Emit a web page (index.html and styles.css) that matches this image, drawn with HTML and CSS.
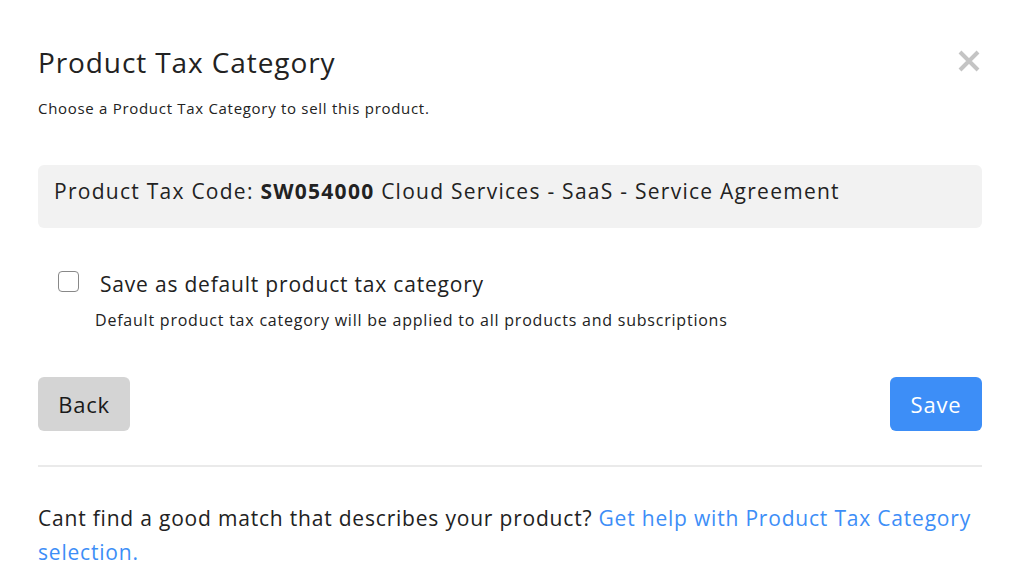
FILE: index.html
```html
<!DOCTYPE html>
<html>
<head>
<meta charset="utf-8">
<link rel="stylesheet" href="styles.css">
</head>
<body>
<div class="modal">
  <div class="header">
    <h1 class="title">Product Tax Category</h1>
    <button class="close" aria-label="Close">
      <svg width="22" height="22" viewBox="0 0 22 22"><path d="M2 2 L20 20 M20 2 L2 20" stroke="#c4c4c4" stroke-width="4"/></svg>
    </button>
  </div>
  <p class="subtitle">Choose a Product Tax Category to sell this product.</p>
  <div class="code-box">Product Tax Code: <b>SW054000</b> Cloud Services - SaaS - Service Agreement</div>
  <label class="check-row">
    <span class="checkbox"></span>
    <span class="check-label">Save as default product tax category</span>
  </label>
  <p class="help">Default product tax category will be applied to all products and subscriptions</p>
  <div class="actions">
    <button class="btn btn-back">Back</button>
    <button class="btn btn-save">Save</button>
  </div>
  <hr class="divider">
  <p class="footer">Cant find a good match that describes your product? <a href="#">Get help with Product Tax Category selection.</a></p>
</div>
</body>
</html>
```
FILE: styles.css
```css
html, body { margin: 0; padding: 0; background: #fff; }
body { font-family: "Open Sans", "Lato", sans-serif; color: #222; }
.modal { padding: 40px 42px 0 38px; }
.header { display: flex; justify-content: space-between; align-items: center; height: 44px; }
.title { margin: 0; font-size: 28px; font-weight: 400; color: #222; letter-spacing: 0.9px; }
.close { background: none; border: 0; padding: 0; margin-right: 2px; margin-top: -2px; display: flex; }
.subtitle { margin: 14px 0 0; font-size: 15px; color: #222; line-height: 20px; letter-spacing: 0.7px; }
.code-box { margin-top: 47px; background: #f2f2f2; border-radius: 6px; height: 63px; padding: 12px 16px 0; box-sizing: border-box; font-size: 21px; line-height: 28px; color: #222; letter-spacing: 1.26px; }
.code-box b { font-weight: 700; }
.check-row { display: flex; align-items: center; margin-top: 38px; padding-left: 20px; }
.checkbox { width: 21px; height: 21px; border: 1.5px solid #888; border-radius: 4px; box-sizing: border-box; }
.check-label { margin-left: 21px; font-size: 21px; line-height: 30px; letter-spacing: 0.8px; position: relative; top: 3px; }
.help { margin: 14px 0 0 57px; font-size: 16px; line-height: 20px; letter-spacing: 0.78px; }
.actions { display: flex; justify-content: space-between; margin-top: 47px; }
.btn { border: 0; border-radius: 6px; height: 54px; width: 92px; font-family: inherit; font-size: 22px; letter-spacing: 0.8px; padding: 0; }
.btn-back { background: #d4d4d4; color: #1a1a1a; }
.btn-save { background: #3d8ef7; color: #fff; }
.divider { border: 0; border-top: 2px solid #eaeaea; margin: 34px 0 0; }
.footer { margin: 34px 0 0; font-size: 21px; line-height: 34px; letter-spacing: 0.8px; }
.footer a { color: #3d8ef7; text-decoration: none; }
```
